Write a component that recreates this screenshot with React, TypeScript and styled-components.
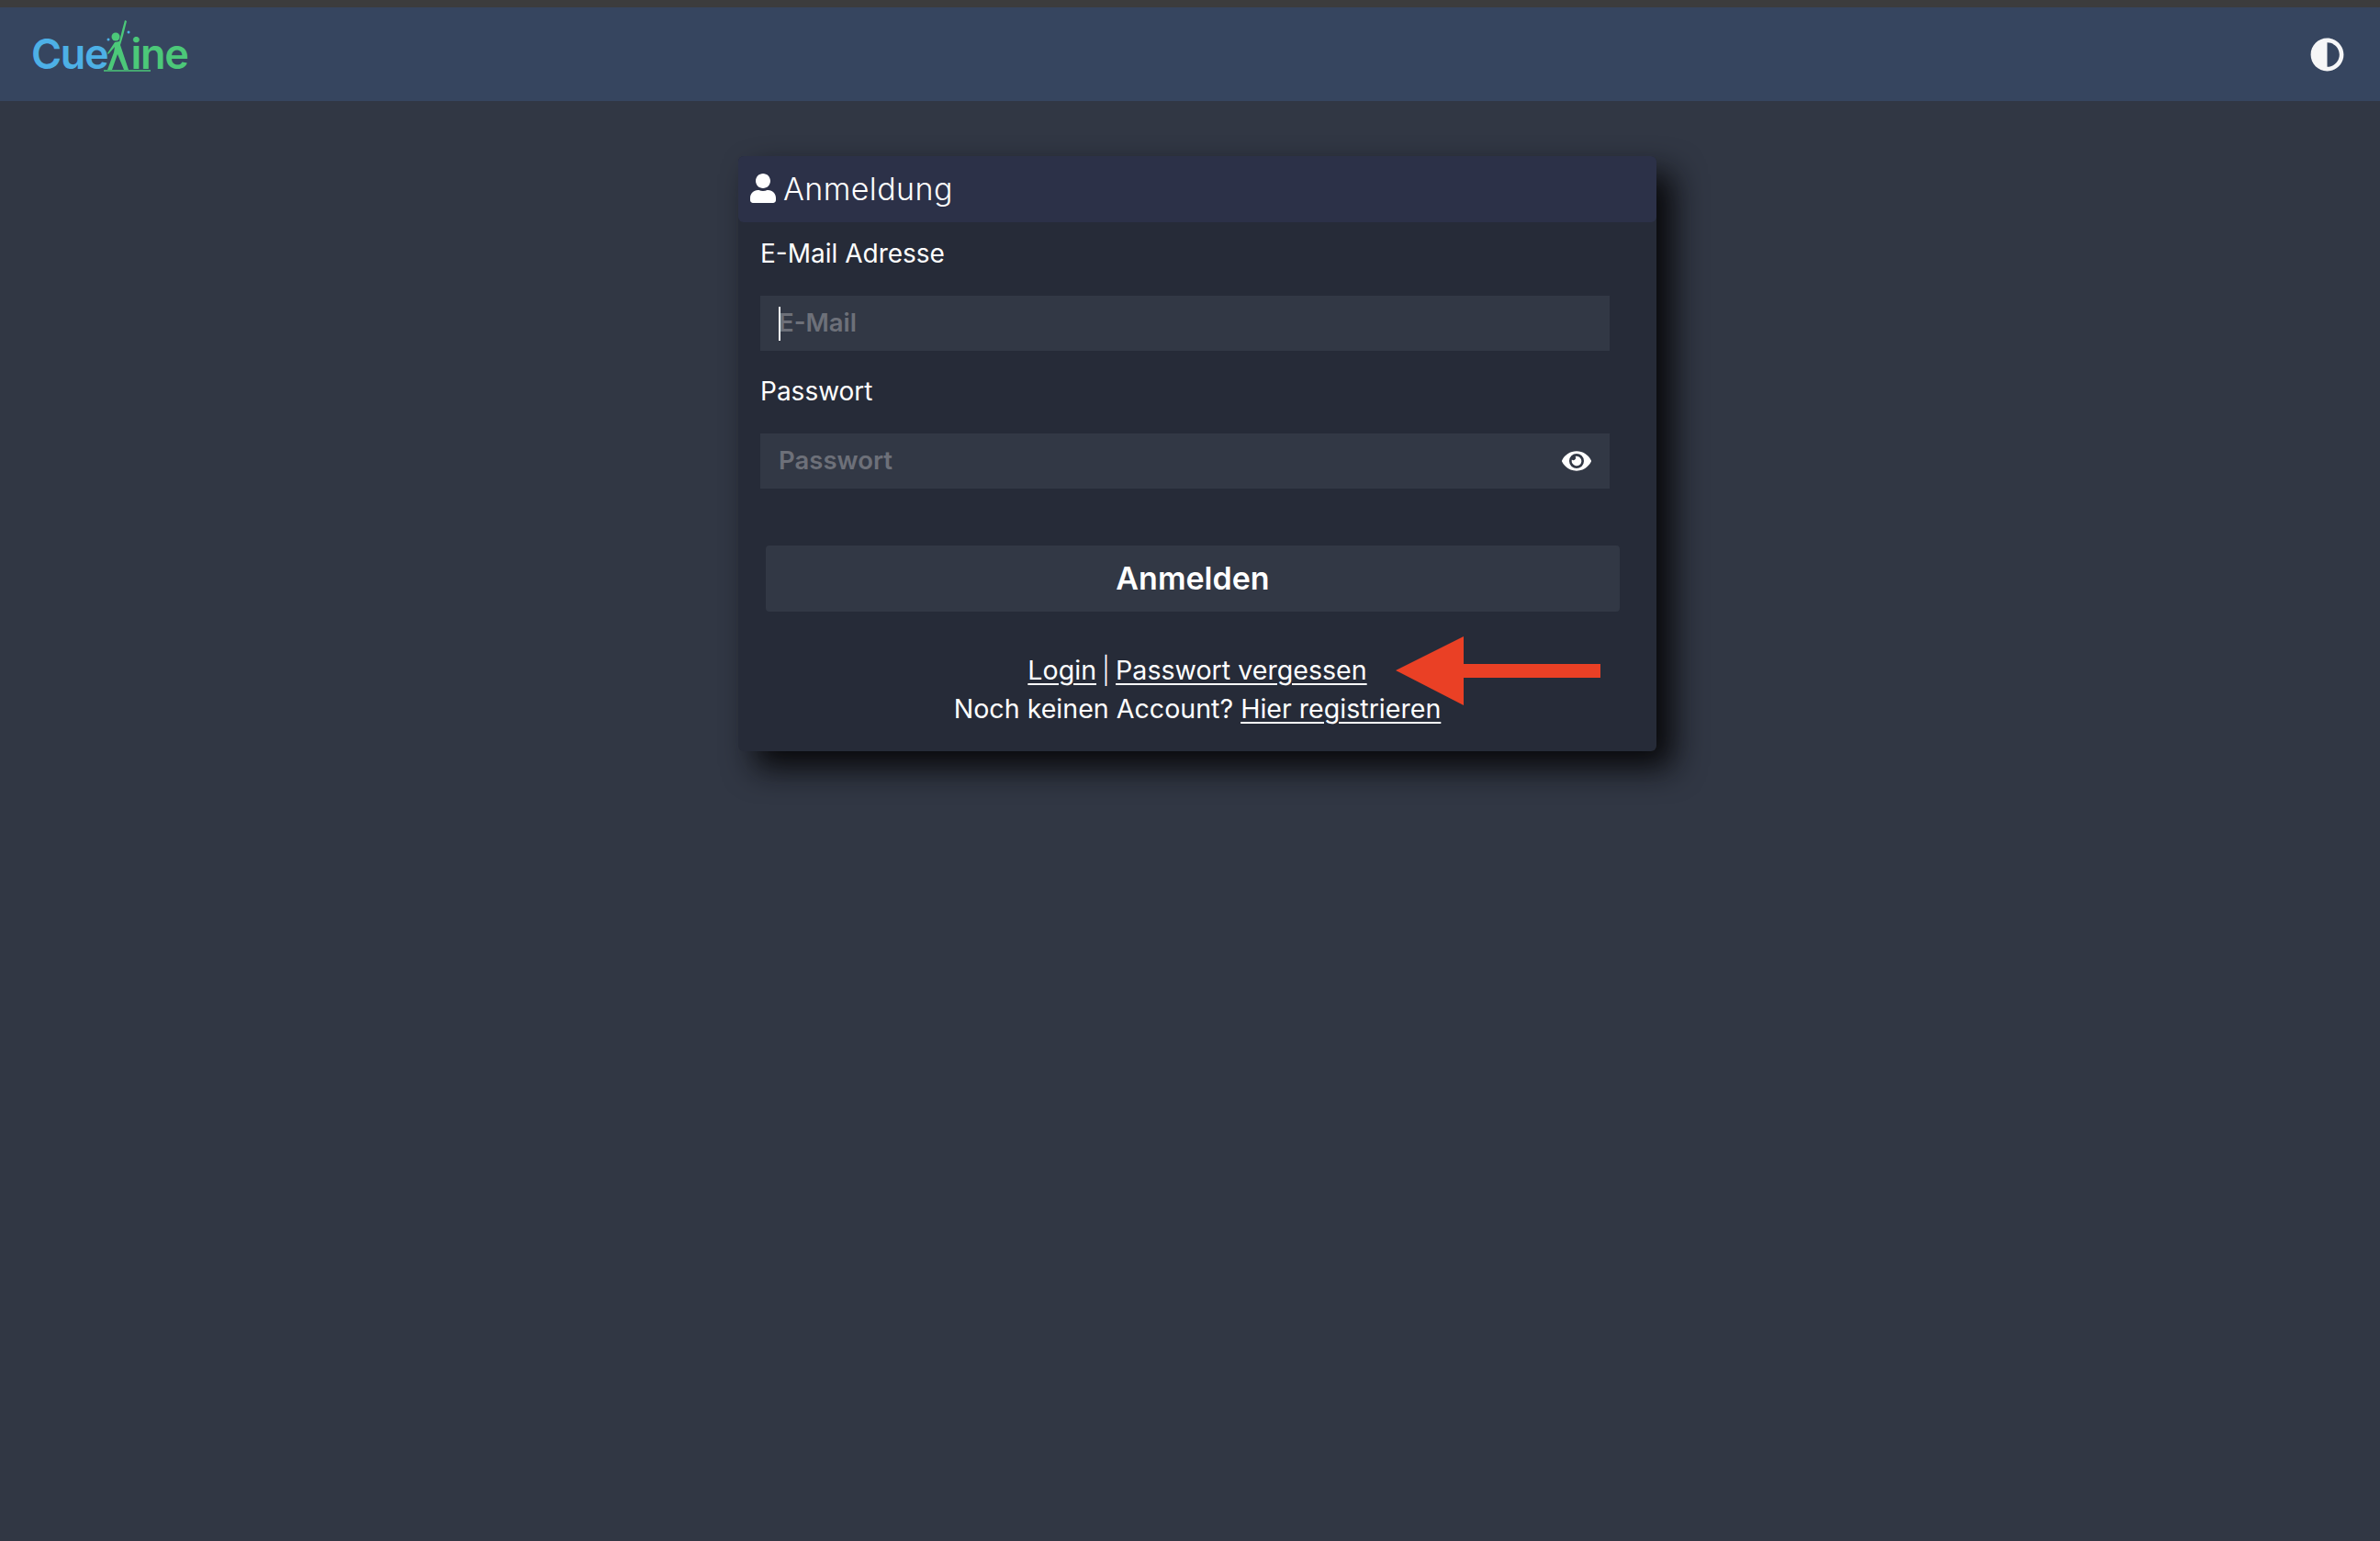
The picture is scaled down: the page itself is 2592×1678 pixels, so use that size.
import React from "react";
import styled, { createGlobalStyle } from "styled-components";
import { FaAdjust, FaEye, FaUser } from "react-icons/fa";

const GlobalStyle = createGlobalStyle`
  html, body {
    margin: 0;
    min-height: 100%;
    background: #313744;
  }
  * {
    box-sizing: border-box;
  }
  #root {
    font-family: "Inter", "Liberation Sans", sans-serif;
    color: #fff;
  }
`;

const Page = styled.div`
  min-height: 1678px;
  background: #313744;
`;

const TopStrip = styled.div`
  height: 8px;
  background: #3c3c3d;
`;

const Navbar = styled.header`
  height: 102px;
  padding: 0 39px 0 34px;
  display: flex;
  align-items: center;
  justify-content: space-between;
  background: #36455f;
`;

const Logo = styled.div`
  display: flex;
  align-items: flex-end;
  height: 58px;
  margin-top: -6px;
  font-size: 45px;
  line-height: 52px;
  font-weight: 600;
  letter-spacing: -1.3px;
`;

const LogoWord = styled.span<{ $color: string }>`
  position: relative;
  color: ${(p) => p.$color};
`;

const LogoFigure = styled.svg`
  width: 54px;
  height: 58px;
  margin: 0 -25px 5px -4px;
  flex: none;
`;

const ThemeToggle = styled.button`
  display: flex;
  padding: 0;
  border: 0;
  background: none;
  color: #f6f6f7;
  font-size: 37px;
`;

const Main = styled.main`
  display: flex;
  justify-content: center;
  padding: 60px 0 0 16px;
`;

const Card = styled.section`
  width: 1000px;
  height: 648px;
  border-radius: 6px;
  background: #262b38;
  box-shadow: 18px 18px 34px #08080a;
`;

const CardHeader = styled.div`
  height: 72px;
  padding: 0 0 2px 11px;
  display: flex;
  align-items: center;
  gap: 6px;
  border-radius: 6px;
  background: #2c3148;
  font-size: 34px;
  font-weight: 300;
  letter-spacing: 0.4px;
`;

const Form = styled.form`
  padding: 5px 0 0 24px;
`;

const Field = styled.div`
  margin-bottom: 15px;
`;

const Label = styled.label`
  display: block;
  height: 75px;
  padding-top: 12px;
  font-size: 28px;
  line-height: 34px;
  font-weight: 400;
`;

const InputWrap = styled.div`
  position: relative;
  width: 925px;
  height: 60px;
`;

const TextInput = styled.input`
  width: 100%;
  height: 100%;
  padding: 0 20px 2px;
  border: 0;
  outline: 0;
  background: #323845;
  color: #fff;
  font-family: inherit;
  font-size: 27.5px;
  font-weight: 600;
  &::placeholder {
    color: #6d7079;
    opacity: 1;
  }
`;

const Caret = styled.span`
  position: absolute;
  left: 20px;
  top: 12px;
  width: 2px;
  height: 37px;
  background: #fff;
`;

const EyeButton = styled.span`
  position: absolute;
  right: 20px;
  top: 14px;
  display: flex;
  color: #fff;
  font-size: 32px;
`;

const SubmitButton = styled.button`
  display: block;
  width: 930px;
  height: 72px;
  margin: 62px 0 0 6px;
  padding: 0 0 1px;
  border: 0;
  border-radius: 4px;
  background: #323845;
  color: #fff;
  font-family: inherit;
  font-size: 34px;
  font-weight: 600;
`;

const LinkBlock = styled.div`
  position: relative;
  margin-top: 43px;
  text-align: center;
  font-size: 28.6px;
  line-height: 42px;
  font-weight: 400;
`;

const TextLink = styled.a`
  color: #fff;
  text-decoration: underline;
  text-underline-offset: 4px;
`;

const Separator = styled.span`
  margin: 0 -2px;
  font-weight: 300;
`;

const Arrow = styled.svg`
  position: absolute;
  left: 716px;
  top: -16px;
  width: 224px;
  height: 76px;
`;

export default function App() {
  return (
    <Page>
      <GlobalStyle />
      <TopStrip />
      <Navbar>
        <Logo>
          <LogoWord $color="#4db0e6">Cue</LogoWord>
          <LogoFigure viewBox="0 0 54 58" aria-hidden="true">
            <circle cx="13" cy="18" r="4.5" fill="#4cc879" />
            <path d="M23 0 L25 1 L21 17 L18 27 L27 54 L22 54 L15 37 L9 54 L4 54 L11 35 L12 29 L5 37 L4 36 L12 24 L17 23 L20 11 Z" fill="#4cc879" />
            <path d="M0 55 H51" stroke="#4cc879" strokeWidth="1.5" />
            <circle cx="5" cy="21" r="1.5" fill="#4db0e6" />
            <circle cx="27" cy="13" r="1.5" fill="#4db0e6" />
          </LogoFigure>
          <LogoWord $color="#4cc879">ine</LogoWord>
        </Logo>
        <ThemeToggle type="button" aria-label="Theme">
          <FaAdjust />
        </ThemeToggle>
      </Navbar>
      <Main>
        <Card>
          <CardHeader>
            <FaUser size={32} />
            Anmeldung
          </CardHeader>
          <Form>
            <Field>
              <Label htmlFor="email">E-Mail Adresse</Label>
              <InputWrap>
                <TextInput id="email" type="email" placeholder="E-Mail" />
                <Caret />
              </InputWrap>
            </Field>
            <Field>
              <Label htmlFor="password">Passwort</Label>
              <InputWrap>
                <TextInput id="password" type="password" placeholder="Passwort" />
                <EyeButton>
                  <FaEye />
                </EyeButton>
              </InputWrap>
            </Field>
            <SubmitButton type="button">Anmelden</SubmitButton>
          </Form>
          <LinkBlock>
            <TextLink href="#">Login</TextLink> <Separator>|</Separator> <TextLink href="#">Passwort vergessen</TextLink>
            <br />
            Noch keinen Account? <TextLink href="#">Hier registrieren</TextLink>
            <Arrow viewBox="0 0 224 76" aria-hidden="true">
              <path d="M0 37 L74 0 V30 H223 V45 H74 V75 Z" fill="#ea4025" />
            </Arrow>
          </LinkBlock>
        </Card>
      </Main>
    </Page>
  );
}
